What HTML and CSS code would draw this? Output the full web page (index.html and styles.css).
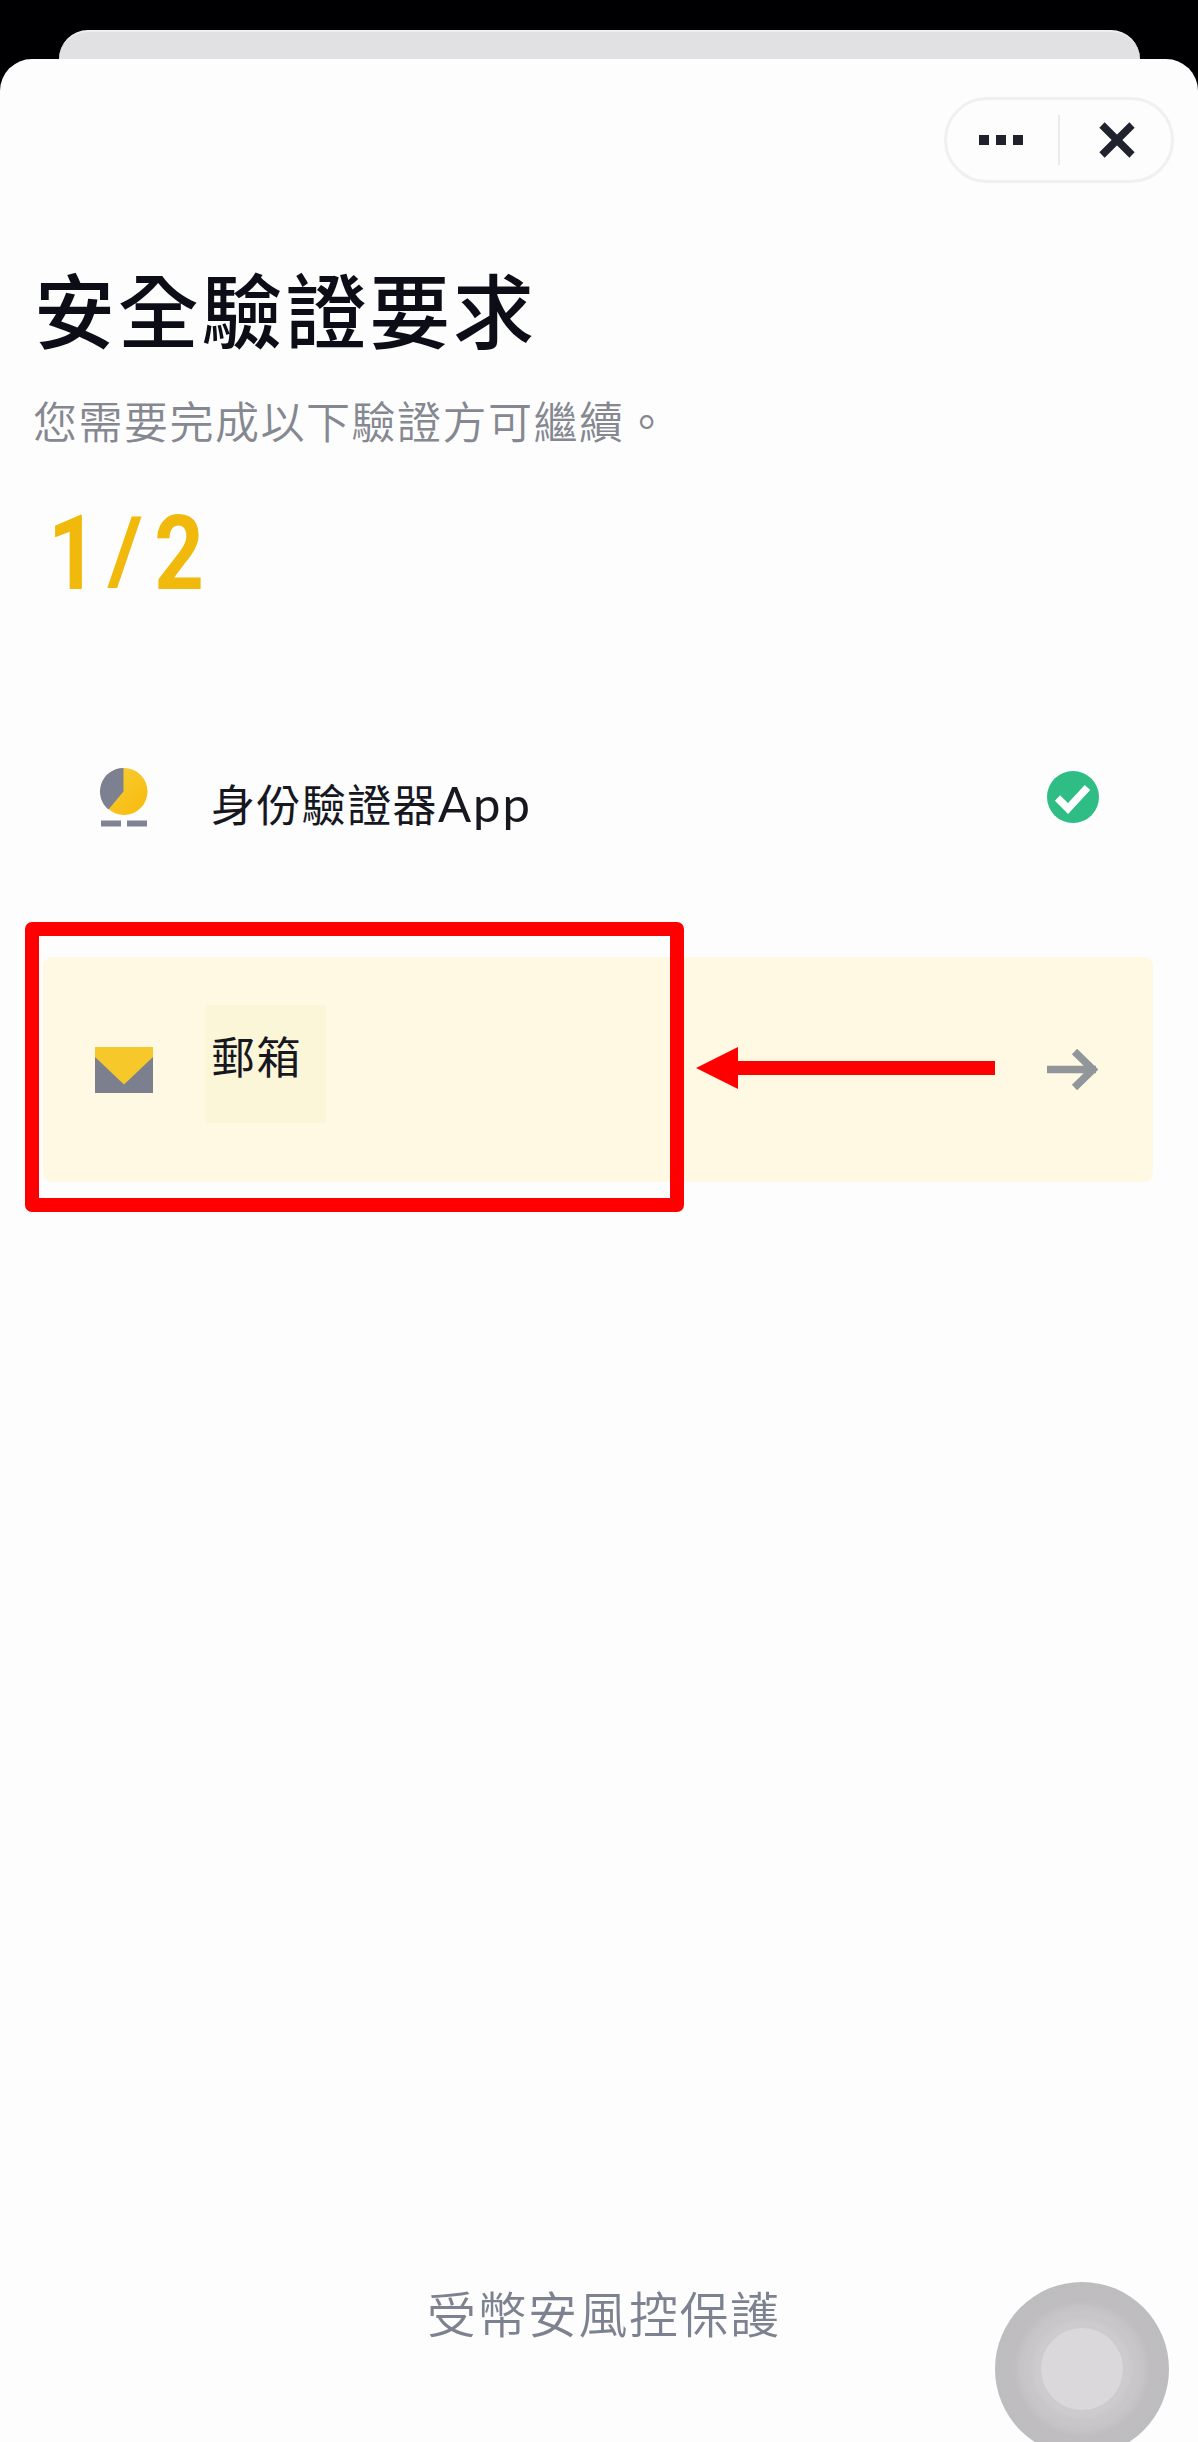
FILE: index.html
```html
<!DOCTYPE html>
<html lang="zh-Hant">
<head>
<meta charset="utf-8">
<title>安全驗證要求</title>
<link rel="stylesheet" href="styles.css">
</head>
<body>
<div class="screen">
  <div class="back-sheet"></div>
  <main class="sheet">
    <div class="toolbar">
      <div class="capsule">
        <svg class="dots" width="44" height="10" viewBox="0 0 44 10"><path fill="#20222b" d="M0 0h10v10H0zM17 0h10v10H17zM34 0h10v10H34z"/></svg>
        <span class="divider"></span>
        <svg class="close" width="36" height="36" viewBox="0 0 36 36"><path d="M3 3l30 30M33 3L3 33" stroke="#20222e" stroke-width="7.5"/></svg>
      </div>
    </div>
    <h1 class="title">安全驗證要求</h1>
    <p class="subtitle">您需要完成以下驗證方可繼續。</p>
    <div class="progress"><span class="digit">1</span><span class="slash">/</span><span class="digit">2</span></div>

    <section class="steps">
      <div class="step">
        <svg class="step-icon" width="60" height="64" viewBox="0 0 60 64">
          <defs><linearGradient id="gold" x1="0" y1="0" x2="1" y2="1"><stop offset="0" stop-color="#f6d03b"/><stop offset="1" stop-color="#f9b90a"/></linearGradient></defs>
          <circle cx="30" cy="25.500" r="23.5" fill="url(#gold)"/>
          <path d="M30 25.500V2A23.500 23.500 0 0 0 15 43.600Z" fill="#7d8090" transform="translate(-.5 0)"/>
          <path d="M7 54.500h20v6H7zM33 54.500h20v6H33z" fill="#7f8393"/>
        </svg>
        <span class="step-label">身份驗證器<span class="latin">App</span></span>
        <svg class="step-state" width="54" height="54" viewBox="0 0 54 54"><circle cx="27" cy="26" r="26" fill="#2dbd85"/><path d="M11.500 27l10.500 10.500L41.500 16.500" fill="none" stroke="#fff" stroke-width="7.500"/></svg>
      </div>
      <div class="step active">
        <svg class="step-icon" width="60" height="48" viewBox="0 0 60 48"><path fill="#7b7f8e" d="M1 1h58v46H1z"/><path fill="#f6c82a" d="M1 1h58v10L30 38.500 1 11z"/></svg>
        <span class="step-label patch">郵箱</span>
        <svg class="step-state" width="54" height="42" viewBox="0 0 54 42"><path d="M1 20.500h49M28.500 2.500l18.500 18-18.500 18" fill="none" stroke="#91969b" stroke-width="7.500"/></svg>
      </div>
    </section>

    <footer class="footer">受幣安風控保護</footer>
  </main>

  <div class="highlight"></div>
  <svg class="pointer" width="299" height="42" viewBox="0 0 299 42"><path fill="red" d="M0 21L42 0v14h257v14H42v14z"/></svg>
  <div class="assist"><div class="assist-ring"><div class="assist-core"></div></div></div>
</div>
</body>
</html>
```
FILE: styles.css
```css
* { box-sizing: border-box; }

body {
  margin: 0;
  background: #000;
  font-family: "Noto Sans CJK TC", "Liberation Sans", sans-serif;
}

svg { display: block; }

.screen {
  position: relative;
  display: flex;
  flex-direction: column;
  width: 1198px;
  height: 2442px;
  padding-top: 30px;
  overflow: hidden;
  background: #000002;
}

.back-sheet {
  flex: none;
  height: 29px;
  margin: 0 58px 0 59px;
  border-top: 2px solid #efeef0;
  border-radius: 29px 29px 0 0;
  background: #e1e0e3;
}

.sheet {
  flex: 1;
  display: flex;
  flex-direction: column;
  border-radius: 32px 32px 0 0;
  background: #fdfdfd;
}

.toolbar {
  display: flex;
  justify-content: flex-end;
  padding: 38px 24px 0 0;
}

.capsule {
  display: flex;
  align-items: center;
  width: 230px;
  height: 86px;
  padding-left: 32px;
  border: 3px solid #f0f0f1;
  border-radius: 43px;
}

.divider {
  width: 2px;
  height: 50px;
  margin: 0 39px 0 35px;
  background: #ebebec;
}

.title {
  margin: 74px 0 0 34px;
  font-size: 81px;
  font-weight: 500;
  line-height: 100px;
  letter-spacing: 2.8px;
  color: #0d0d17;
}

.subtitle {
  margin: 33px 0 0 33px;
  font-size: 44px;
  font-weight: 350;
  line-height: 60px;
  letter-spacing: 1.5px;
  color: #858891;
}

.progress {
  display: flex;
  gap: 7px;
  width: 210px;
  height: 100px;
  margin: 54px 0 0 48px;
  font-family: Roboto, "Liberation Sans", sans-serif;
  font-size: 103px;
  font-weight: 700;
  line-height: 100px;
  color: #f0b90b;
  transform: scaleX(.84);
  transform-origin: 0 50%;
}

/* the slash spans exactly the height of the digits and leans further */
.slash {
  margin: 0 8px 0 7px;
  transform: scale(1.08, .9) translateY(-4px);
}

.steps {
  padding: 119px 45px 0 43px;
}

.step {
  display: flex;
  align-items: center;
  height: 150px;
  padding: 0 53px 0 51px;
}

.step .step-label {
  padding: 10px 0 0 8px;
  margin-left: 49px;
  font-size: 44px;
  line-height: 60px;
  letter-spacing: 1.4px;
  color: #17171f;
  white-space: nowrap;
}

.step .latin {
  font-family: Lato, "Liberation Sans", sans-serif;
  font-size: 49px;
  line-height: 50px;
  letter-spacing: 2px;
}

.step-state { margin-left: auto; }

.active {
  height: 225px;
  margin-top: 84px;
  border-radius: 9px;
  background: #fff9e3;
}

.step .patch {
  width: 121px;
  height: 118px;
  margin: -11px 0 0 51px;
  padding: 20px 0 0 6px;
  background: #fbf6d8;
}

.footer {
  margin-top: auto;
  padding: 0 0 95px 427px;
  font-size: 49px;
  font-weight: 350;
  line-height: 70px;
  letter-spacing: 1.5px;
  color: #7c828f;
}

.highlight {
  position: absolute;
  left: 25px;
  top: 922px;
  width: 659px;
  height: 290px;
  border: 14px solid #f00;
  border-radius: 7px;
}

.pointer {
  position: absolute;
  left: 696px;
  top: 1047px;
}

.assist {
  position: absolute;
  left: 995px;
  top: 2282px;
  display: grid;
  place-items: center;
  width: 174px;
  height: 174px;
  border-radius: 50%;
  background: radial-gradient(circle closest-side, #c6c4c7 70%, #bfbdc0 78%, #bdbcbe 100%);
}

.assist-ring {
  display: grid;
  place-items: center;
  width: 116px;
  height: 116px;
  border-radius: 50%;
  background: radial-gradient(circle closest-side, #cdcbce 80%, #c8c6c9 90%);
}

.assist-core {
  width: 82px;
  height: 82px;
  border-radius: 50%;
  background: #dad8db;
}
```
